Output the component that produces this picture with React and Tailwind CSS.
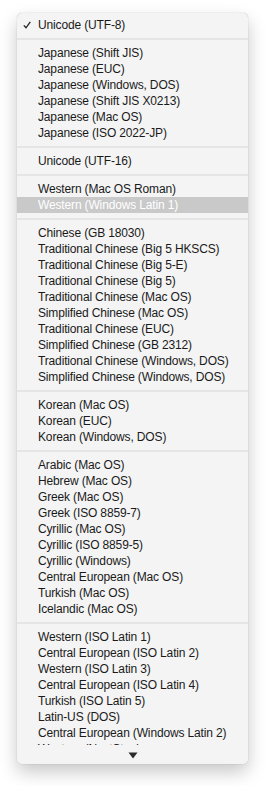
import React from "react";

const groups = [
  ["Unicode (UTF-8)"],
  [
    "Japanese (Shift JIS)",
    "Japanese (EUC)",
    "Japanese (Windows, DOS)",
    "Japanese (Shift JIS X0213)",
    "Japanese (Mac OS)",
    "Japanese (ISO 2022-JP)",
  ],
  ["Unicode (UTF-16)"],
  ["Western (Mac OS Roman)", "Western (Windows Latin 1)"],
  [
    "Chinese (GB 18030)",
    "Traditional Chinese (Big 5 HKSCS)",
    "Traditional Chinese (Big 5-E)",
    "Traditional Chinese (Big 5)",
    "Traditional Chinese (Mac OS)",
    "Simplified Chinese (Mac OS)",
    "Traditional Chinese (EUC)",
    "Simplified Chinese (GB 2312)",
    "Traditional Chinese (Windows, DOS)",
    "Simplified Chinese (Windows, DOS)",
  ],
  ["Korean (Mac OS)", "Korean (EUC)", "Korean (Windows, DOS)"],
  [
    "Arabic (Mac OS)",
    "Hebrew (Mac OS)",
    "Greek (Mac OS)",
    "Greek (ISO 8859-7)",
    "Cyrillic (Mac OS)",
    "Cyrillic (ISO 8859-5)",
    "Cyrillic (Windows)",
    "Central European (Mac OS)",
    "Turkish (Mac OS)",
    "Icelandic (Mac OS)",
  ],
  [
    "Western (ISO Latin 1)",
    "Central European (ISO Latin 2)",
    "Western (ISO Latin 3)",
    "Central European (ISO Latin 4)",
    "Turkish (ISO Latin 5)",
    "Latin-US (DOS)",
    "Central European (Windows Latin 2)",
    "Western (NextStep)",
  ],
];

function Row({ label }) {
  const checked = label === "Unicode (UTF-8)";
  const hl = label === "Western (Windows Latin 1)";
  return (
    <div
      className={
        "relative h-4 flex items-center pl-[21px] whitespace-nowrap " +
        (hl ? "bg-[#c9c9c9] text-white" : "text-[#1a1a1a]")
      }
    >
      {checked && (
        <svg
          className="absolute left-[6px] top-[4px]"
          width="8"
          height="8"
          viewBox="0 0 8 8"
        >
          <path
            d="M0.8 4.4 L3 6.8 L7.3 0.8"
            fill="none"
            stroke="#222"
            strokeWidth="1.3"
          />
        </svg>
      )}
      {label}
    </div>
  );
}

function Sep() {
  return (
    <div className="h-3 flex items-center">
      <div className="w-full h-[2px] bg-[#e5e5e5]" />
    </div>
  );
}

export default function App() {
  return (
    <div className="w-[265px] h-[786px] bg-white pt-[13px] pl-[17px]">
      <div
        className="relative w-[231px] h-[751px] rounded-[5px] bg-[#f4f4f4] shadow-[0_8px_18px_rgba(0,0,0,0.22),0_0_1px_rgba(0,0,0,0.35)] overflow-hidden pt-1 text-[12px] leading-4 tracking-[-0.15px]"
        style={{ fontFamily: '"Liberation Sans", Arial, sans-serif' }}
      >
        {groups.map((g, i) => (
          <React.Fragment key={i}>
            {i > 0 && <Sep />}
            {g.map((l) => (
              <Row key={l} label={l} />
            ))}
          </React.Fragment>
        ))}
        <div className="absolute left-0 right-0 bottom-0 h-[19px] bg-[#f4f4f4] flex items-center justify-center pt-[1px]">
          <svg width="10" height="7" viewBox="0 0 10 7">
            <path d="M0.5 0.5 L9.5 0.5 L5 6.5 Z" fill="#2a2a2a" />
          </svg>
        </div>
      </div>
    </div>
  );
}
